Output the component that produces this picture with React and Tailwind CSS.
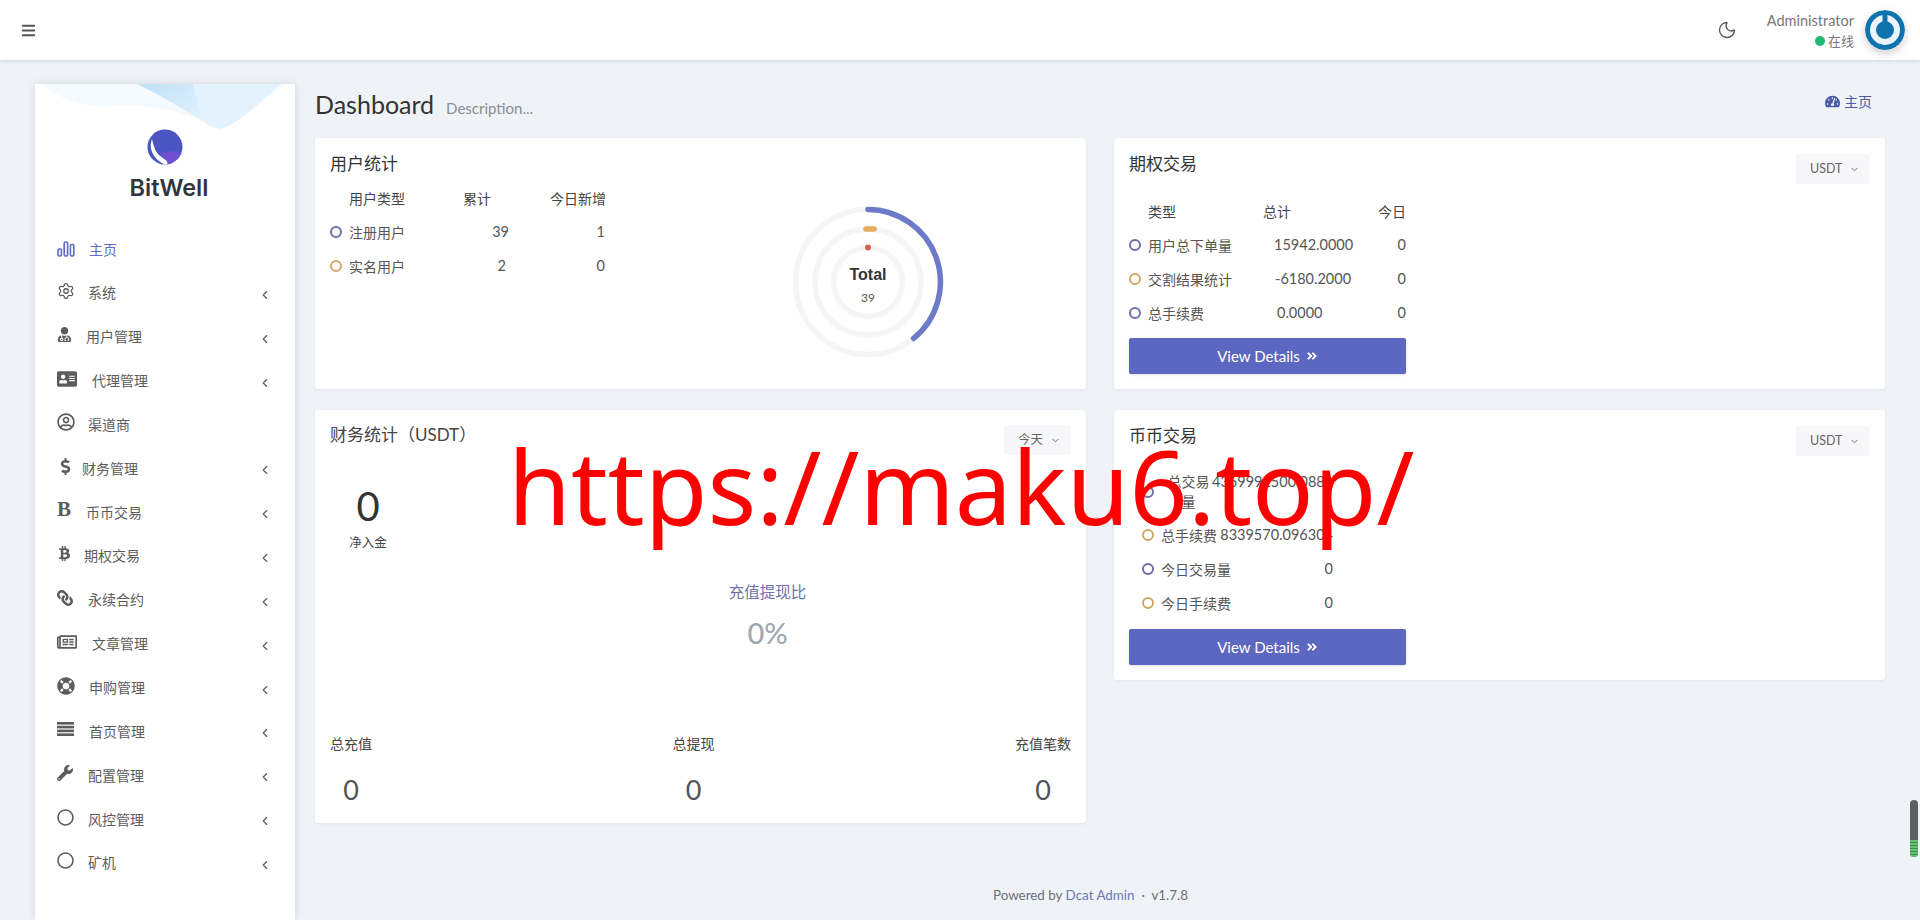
import {
  FaAddressCard,
  FaAngleDoubleRight,
  FaBtc,
  FaDollarSign,
  FaLifeRing,
  FaRegCircle,
  FaRegNewspaper,
  FaRegUserCircle,
  FaTachometerAlt,
  FaUserMd,
  FaWrench,
  FaBars,
  FaLink,
} from "react-icons/fa";
import { ChevronDown, ChevronLeft, Moon, Settings } from "lucide-react";

const font = "font-['Lato','Noto_Sans_CJK_SC',sans-serif]";

const BarsIcon = () => (
  <svg width="18" height="16" viewBox="0 0 18 16" fill="none" stroke="#5c6bc0" strokeWidth="1.6">
    <rect x="1" y="8" width="3.4" height="7" rx="1.2" />
    <rect x="7.2" y="1" width="3.4" height="14" rx="1.2" />
    <rect x="13.4" y="3.5" width="3.4" height="11.5" rx="1.2" />
  </svg>
);

const ListIcon = () => (
  <svg width="17" height="14" viewBox="0 0 17 14" fill="currentColor">
    <rect y="0" width="17" height="2.6" />
    <rect y="3.8" width="17" height="2.6" />
    <rect y="7.6" width="17" height="2.6" />
    <rect y="11.4" width="17" height="2.6" />
  </svg>
);

const menu = [
  { label: "系统", icon: <Settings size={18} strokeWidth={1.7} />, cell: "w-[31px]", arrow: true },
  { label: "用户管理", icon: <FaUserMd size={15} />, cell: "w-[29px]", arrow: true },
  { label: "代理管理", icon: <FaAddressCard size={20} />, cell: "w-[35px]", arrow: true },
  { label: "渠道商", icon: <FaRegUserCircle size={18} />, cell: "w-[31px]" },
  { label: "财务管理", icon: <FaDollarSign size={17} />, cell: "w-[25px]", arrow: true },
  { label: "币币交易", icon: <span className="font-['Liberation_Serif'] text-[21px] leading-none font-bold">B</span>, cell: "w-[29px]", arrow: true },
  { label: "期权交易", icon: <FaBtc size={15} />, cell: "w-[27px]", arrow: true },
  { label: "永续合约", icon: <FaLink size={16} className="-scale-x-100" />, cell: "w-[31px]", arrow: true },
  { label: "文章管理", icon: <FaRegNewspaper size={20} />, cell: "w-[35px]", arrow: true },
  { label: "申购管理", icon: <FaLifeRing size={18} />, cell: "w-[32px]", arrow: true },
  { label: "首页管理", icon: <ListIcon />, cell: "w-[32px]", arrow: true },
  { label: "配置管理", icon: <FaWrench size={16} />, cell: "w-[31px]", arrow: true },
  { label: "风控管理", icon: <FaRegCircle size={17} />, cell: "w-[31px]", arrow: true },
  { label: "矿机", icon: <FaRegCircle size={17} />, cell: "w-[31px]", arrow: true },
];

const Sidebar = () => (
  <aside className="relative w-[260px] shrink-0 bg-white shadow-[0_0_8px_rgba(0,0,0,0.12)] self-stretch">
    <svg className="absolute left-0 top-0" width="260" height="46" viewBox="0 0 260 46">
      <defs>
        <linearGradient id="wave" x1="0" y1="0" x2="1" y2="1">
          <stop offset="0" stopColor="#bfe0f7" />
          <stop offset="1" stopColor="#eaf6fd" />
        </linearGradient>
      </defs>
      <path d="M8 0H250C225 18 205 38 190 44 182 46 176 43 168 38 140 24 110 20 80 22 50 24 25 16 8 0Z" fill="#f4fafe" />
      <path d="M102 0H160C163 14 165 25 168 36 172 41 176 43 180 44 155 30 128 12 102 0Z" fill="url(#wave)" />
      <path d="M158 0H245C225 18 205 38 186 45 178 45 172 40 166 32 163 22 160 10 158 0Z" fill="#e3f2fc" />
    </svg>
    <div className="relative flex flex-col items-center pt-[45px]">
      <svg width="36" height="36" viewBox="0 0 36 36">
        <circle cx="18" cy="18" r="17.5" fill="#4a55c2" />
        <path d="M12 26C18 21 27 22 34 24 30 32 25 35 20 35 21 31 18 28 12 26Z" fill="#6f4fd0" />
        <path d="M5 10C1 20 7 31 18 35.5L20.5 35C21 30 13 29 9.5 23 7 19 6 14 5 10Z" fill="#fff" />
      </svg>
      <div className="mt-[8px] ml-[8px] text-[23.5px] leading-[30px] font-semibold text-[#2f3640] font-['Inter',sans-serif]">BitWell</div>
    </div>
    <nav className="mt-[24px] pl-[22px] pr-[23px] text-[#5c5c5c]">
      <div className="flex h-[44px] items-center text-[#5c6bc0] text-[14px]">
        <span className="flex w-[32px] shrink-0 -mt-[1px]"><BarsIcon /></span>
        <span>主页</span>
      </div>
      {menu.map((item) => (
        <div key={item.label} className="flex h-[43.85px] items-center text-[14px]">
          <span className={`flex shrink-0 items-center -mt-[4px] overflow-visible ${item.cell}`}>
            <span className="shrink-0">{item.icon}</span>
          </span>
          <span>{item.label}</span>
          {item.arrow && <ChevronLeft size={14} className="ml-auto mt-[4px]" />}
        </div>
      ))}
    </nav>
  </aside>
);

const Ring = ({ color = "#586cb1" }) => (
  <span className="inline-block h-[12px] w-[12px] shrink-0 rounded-full border-2" style={{ borderColor: color }} />
);

const PURPLE = "#6e6fa8";
const GOLD = "#d3a669";

const Donut = () => (
  <svg width="170" height="170" viewBox="0 0 170 170">
    <g fill="none" stroke="#f5f5f7" strokeWidth="5.5">
      <circle cx="85" cy="85" r="72.5" />
      <circle cx="85" cy="85" r="53" />
      <circle cx="85" cy="85" r="34.5" />
    </g>
    <path d="M85 12.5A72.5 72.5 0 0 1 130.6 141.3" fill="none" stroke="#6c7bc8" strokeWidth="5.5" strokeLinecap="round" />
    <path d="M83 32H91" fill="none" stroke="#e2ac5c" strokeWidth="5.5" strokeLinecap="round" />
    <circle cx="85" cy="50.5" r="3" fill="#d9604f" />
  </svg>
);

const Select = ({ text, w }) => (
  <div className={`flex h-[30px] items-center justify-between rounded-[3px] bg-[#f7f7f9] px-[14px] text-[12.5px] text-[#666] ${w}`}>
    <span>{text}</span>
    <ChevronDown size={11} className="-mr-[4px]" />
  </div>
);

const Details = () => (
  <div className="flex h-[36px] w-[277px] items-center justify-center gap-[6px] rounded-[2px] bg-[#5c67c1] text-[15px] text-white shadow-sm">
    View Details <FaAngleDoubleRight size={12} />
  </div>
);

const optionRows = [
  [PURPLE, "用户总下单量", "15942.0000", "ml-[42px]", "0"],
  [GOLD, "交割结果统计", "-6180.2000", "ml-[43px]", "0"],
  [PURPLE, "总手续费", "0.0000", "ml-[73px]", "0"],
];

const UserCard = () => (
  <section className="flex h-[251px] rounded-[3px] bg-white px-[15px] shadow-[0_1px_3px_rgba(0,0,0,0.06)]">
    <div className="w-[300px]">
      <h2 className="pt-[14px] text-[17px] leading-[24px] text-[#333]">用户统计</h2>
      <div className="mt-[5px] flex h-[34px] items-center text-[14px] text-[#444]">
        <span className="ml-[19px] w-[114px]">用户类型</span>
        <span className="w-[87px]">累计</span>
        <span>今日新增</span>
      </div>
      <div className="flex h-[34px] items-center text-[14px] text-[#555]">
        <Ring color={PURPLE} />
        <span className="ml-[7px] w-[105px]">注册用户</span>
        <span className="w-[29px] ml-[26px] text-right text-[14.5px]">39</span>
        <span className="ml-[67px] w-[29px] text-right text-[14.5px]">1</span>
      </div>
      <div className="flex h-[34px] items-center text-[14px] text-[#555]">
        <Ring color={GOLD} />
        <span className="ml-[7px] w-[105px]">实名用户</span>
        <span className="w-[25px] ml-[27px] text-right text-[14.5px]">2</span>
        <span className="ml-[70px] w-[29px] text-right text-[14.5px]">0</span>
      </div>
    </div>
    <div className="relative ml-[153px] mt-[59px] h-[170px] w-[170px]">
      <Donut />
      <div className="absolute inset-0 flex flex-col items-center justify-center pt-[5px]">
        <span className="text-[16px] leading-[24px] font-bold text-[#333] font-['Liberation_Sans',sans-serif]">Total</span>
        <span className="mt-[2px] text-[12px] leading-[18px] text-[#555]">39</span>
      </div>
    </div>
  </section>
);

const FinanceCard = () => (
  <section className="mt-[21px] flex h-[413px] flex-col rounded-[3px] bg-white px-[15px] shadow-[0_1px_3px_rgba(0,0,0,0.06)]">
    <div className="flex items-start justify-between pt-[13px]">
      <h2 className="text-[17px] leading-[24px] text-[#444]">财务统计（USDT）</h2>
      <Select text="今天" w="w-[67px] mt-[2px]" />
    </div>
    <div className="mt-[27px] ml-[13px] flex w-[50px] flex-col items-center">
      <span className="text-[40px] leading-[48px] text-[#333]">0</span>
      <span className="mt-[4px] text-[12.5px] leading-[18px] text-[#444]">净入金</span>
    </div>
    <div className="mt-[28px] flex flex-col items-center pl-[134px]">
      <span className="text-[15.5px] leading-[24px] text-[#6d72ad]">充值提现比</span>
      <span className="mt-[13px] text-[29px] leading-[32px] font-medium text-[#a1a7ae]">0%</span>
    </div>
    <div className="mt-[84px] flex justify-between text-[14px] text-[#444]">
      <span>总充值</span>
      <span>总提现</span>
      <span>充值笔数</span>
    </div>
    <div className="mt-[18px] flex justify-between text-[27px] leading-[36px] text-[#555]">
      <span className="w-[42px] text-center">0</span>
      <span className="w-[42px] text-center">0</span>
      <span className="w-[56px] text-center">0</span>
    </div>
  </section>
);

const OptionCard = () => (
  <section className="h-[251px] rounded-[3px] bg-white px-[15px] shadow-[0_1px_3px_rgba(0,0,0,0.06)]">
    <div className="flex items-start justify-between pt-[14px]">
      <h2 className="text-[17px] leading-[24px] text-[#333]">期权交易</h2>
      <Select text="USDT" w="w-[74px] mt-[2px]" />
    </div>
    <div className="mt-[10px] flex h-[34px] w-[277px] items-center text-[14px] text-[#444]">
      <span className="ml-[19px] w-[115px]">类型</span>
      <span>总计</span>
      <span className="ml-auto">今日</span>
    </div>
    {optionRows.map(([color, name, total, offset, today]) => (
      <div key={name} className="flex h-[34px] w-[277px] items-center text-[14px] text-[#555]">
        <Ring color={color} />
        <span className="ml-[7px] whitespace-nowrap">{name}</span>
        <span className={`text-[14.5px] ${offset}`}>{total}</span>
        <span className="ml-auto text-[14.5px]">{today}</span>
      </div>
    ))}
    <div className="mt-[8px]"><Details /></div>
  </section>
);

const CoinCard = () => (
  <section className="mt-[21px] h-[270px] rounded-[3px] bg-white px-[15px] shadow-[0_1px_3px_rgba(0,0,0,0.06)]">
    <div className="flex items-start justify-between pt-[14px]">
      <h2 className="text-[17px] leading-[24px] text-[#333]">币币交易</h2>
      <Select text="USDT" w="w-[74px] mt-[2px]" />
    </div>
    <div className="mt-[16px] ml-[13px] w-[191px] text-[14px] text-[#555]">
      <div className="flex items-center">
        <Ring color={PURPLE} />
        <span className="ml-[13px] w-[43px] shrink-0 text-center leading-[20px]">总交易量</span>
        <span className="-mt-[20px] ml-[2px] whitespace-nowrap text-[14.5px] leading-[20px]">4369992500.0881</span>
      </div>
      <div className="mt-[6px] flex h-[34px] items-center whitespace-nowrap">
        <Ring color={GOLD} />
        <span className="ml-[7px]">总手续费</span>
        <span className="ml-auto text-[14.5px]">8339570.096304</span>
      </div>
      <div className="flex h-[34px] items-center">
        <Ring color={PURPLE} />
        <span className="ml-[7px]">今日交易量</span>
        <span className="ml-auto text-[14.5px]">0</span>
      </div>
      <div className="flex h-[34px] items-center">
        <Ring color={GOLD} />
        <span className="ml-[7px]">今日手续费</span>
        <span className="ml-auto text-[14.5px]">0</span>
      </div>
    </div>
    <div className="mt-[9px]"><Details /></div>
  </section>
);

const App = () => {
  return (
    <div className={`relative flex h-[920px] flex-col overflow-hidden bg-[#eff2f7] ${font}`}>
      <header className="relative z-10 flex h-[60px] shrink-0 items-center bg-white px-[21px] shadow-[0_1px_4px_rgba(0,0,0,0.12)]">
        <FaBars size={15} className="text-[#555]" />
        <Moon size={20} strokeWidth={1.6} className="ml-auto text-[#555]" />
        <div className="ml-[30px] mt-[2px] flex flex-col items-end text-[14.5px] leading-[20px] text-[#777]">
          <span>Administrator</span>
          <span className="flex items-center text-[13px] leading-[20px]">
            <span className="mr-[3px] h-[10px] w-[10px] rounded-full bg-[#21b978]" />
            在线
          </span>
        </div>
        <svg className="ml-[11px] -mr-[6px] rounded-full shadow-[0_3px_8px_rgba(0,0,0,0.2)]" width="40" height="40" viewBox="0 0 40 40">
          <circle cx="20" cy="20" r="20" fill="#0f74ad" />
          <circle cx="20" cy="20" r="12" fill="none" stroke="#eaf4fa" strokeWidth="6" />
          <rect x="17.5" y="4" width="5" height="15" rx="2" fill="#0f74ad" />
        </svg>
      </header>

      <div className="flex flex-1 min-h-0 pl-[35px] pr-[35px] pt-[24px]">
        <Sidebar />
        <main className="ml-[20px] flex min-w-0 flex-1 flex-col">
          <div className="flex h-[54px] items-start justify-between pt-[4px]">
            <div className="flex items-baseline">
              <h1 className="text-[25px] leading-[32px] text-[#333]">Dashboard</h1>
              <span className="ml-[12px] text-[15px] text-[#8a8f96]">Description...</span>
            </div>
            <div className="mr-[13px] mt-[3px] flex items-center gap-[4px] text-[14px] text-[#4a5aa8]">
              <FaTachometerAlt size={15} />
              主页
            </div>
          </div>
          <div className="flex gap-[28px]">
            <div className="w-[771px]">
              <UserCard />
              <FinanceCard />
            </div>
            <div className="flex-1">
              <OptionCard />
              <CoinCard />
            </div>
          </div>
          <div className="mt-[62px] pl-[678px] text-[13.4px] text-[#6b7178]">
            Powered by <span className="text-[#6d78b8]">Dcat Admin</span> &nbsp;·&nbsp; v1.7.8
          </div>
        </main>
      </div>

      <div className="absolute left-[508px] top-[421px] whitespace-nowrap font-['Noto_Sans',sans-serif] text-[102px] leading-[130px] text-[#ff0000]">
        https://maku6.top/
      </div>

      <div className="absolute left-[1910px] top-[800px] h-[57px] w-[8px] overflow-hidden rounded-full bg-[#5c5f62]">
        <div className="mt-[40px] h-[17px] bg-[repeating-linear-gradient(0deg,#63c06f_0_2px,#3f8f52_2px_3px)]" />
      </div>
    </div>
  );
};

export default App;
